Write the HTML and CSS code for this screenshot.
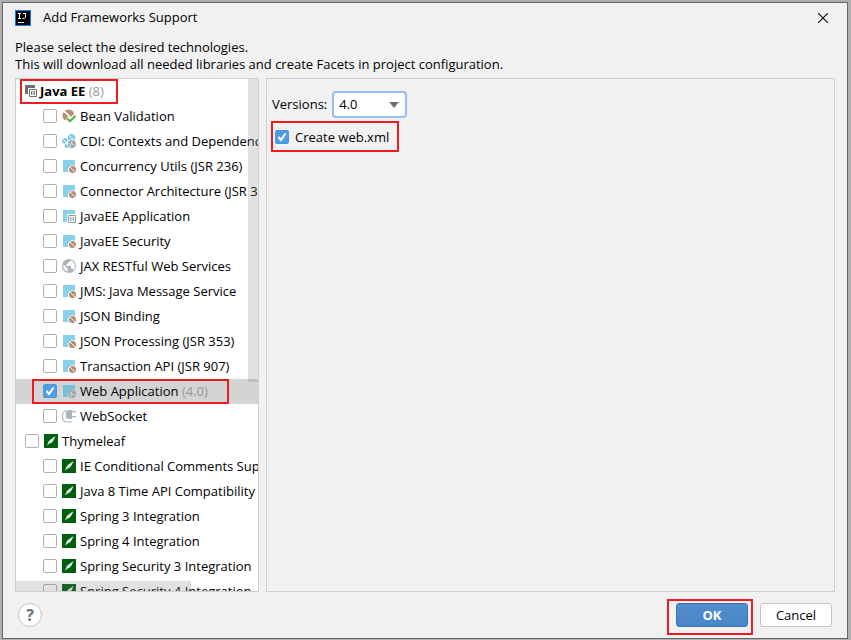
FILE: index.html
```html
<!DOCTYPE html>
<html lang="en">

<head>
    <meta charset="UTF-8">
    <title>Add Frameworks Support</title>
    <link rel="stylesheet" href="styles.css">
</head>

<body>
    <!-- icons used in the tree -->
    <svg class="sprite" aria-hidden="true">
        <symbol id="bean" viewBox="0 0 14 14">
            <circle cx="7" cy="7" r="6.5" fill="#b58f72"/>
            <path d="M1.500 2.500 C6 3 7 10 12.500 11.500" fill="none" stroke="#fff" stroke-width="1.800"/>
        </symbol>
        <symbol id="globe" viewBox="0 0 14 14">
            <circle cx="7" cy="7" r="7" fill="#a9b4bb"/>
            <path d="M1.300 5.500 L5.500 9 V12.500 C3 12 1 9.500 1.300 5.500 Z M8 1.300 V3 H6 V5 H4.500 V7 H9 V9.500 H10.500 L12 11 C13.600 8 13 3.500 9.500 1.800 Z" fill="#fff"/>
        </symbol>
        <symbol id="globe-small" viewBox="0 0 8 8">
            <circle cx="4" cy="4" r="3.900" fill="#98a4ac"/>
            <path d="M1 3.500 L3 5 V6.800 M4.500 1 L3 3 L5 4.500 L6.500 5.500" fill="none" stroke="#eee" stroke-width="0.900"/>
        </symbol>
        <symbol id="validation" viewBox="0 0 14 14">
            <use href="#bean" x="0" y="0" width="13" height="13"/>
            <path d="M4.500 9.500 L7.800 12.500 L14 6" fill="none" stroke="#fff" stroke-width="4.500"/>
            <path d="M5 9.500 L8 12.300 L13.500 6.800" fill="none" stroke="#59b03f" stroke-width="2"/>
        </symbol>
        <symbol id="cdi" viewBox="0 0 14 14">
            <circle cx="9.500" cy="3.700" r="3.700" fill="#7cc8e4"/>
            <path d="M6.500 1 L12.500 6.500" stroke="#fff"/>
            <circle cx="2.800" cy="6.800" r="2.800" fill="#7cc8e4"/>
            <path d="M1 5 L5 9" stroke="#fff"/>
            <circle cx="4.500" cy="12" r="2" fill="#7cc8e4"/>
            <circle cx="10" cy="10" r="4.800" fill="#fff"/>
            <use href="#globe-small" x="6" y="6" width="8" height="8"/>
        </symbol>
        <symbol id="module-bean" viewBox="0 0 14 14">
            <path d="M1 1 H13 V7 H9 L6.500 9 V13 H1 Z" fill="#87d1eb"/>
            <circle cx="10.500" cy="10.500" r="4.300" fill="#fff"/>
            <circle cx="10.500" cy="10.500" r="3.500" fill="#b58f72"/>
            <path d="M8 8 L13 13" stroke="#fff" stroke-width="0.900"/>
        </symbol>
        <symbol id="module-ee" viewBox="0 0 14 14">
            <path d="M1 1 H13 V5 H5 V13 H1 Z" fill="#87d1eb"/>
            <path d="M6.500 6.500 H13.500 V13.500 H6.500 Z" fill="#fff" stroke="#8f9ba3"/>
            <path d="M9.500 8.500 H8.500 V11.500 H9.500 M8.500 10 H9.500 M12 8.500 H11 V11.500 H12 M11 10 H12" fill="none" stroke="#8f9ba3"/>
        </symbol>
        <symbol id="module-web" viewBox="0 0 14 14">
            <path d="M1 1 H13 V5.500 H9 L5.500 8 V13 H1 Z" fill="#75bfd9"/>
            <use href="#globe-small" x="6" y="6" width="8" height="8"/>
        </symbol>
        <symbol id="plug" viewBox="0 0 14 14">
            <path d="M7 1 H10 V10 H7 C4.500 10 4 8.500 4 7.500 V3.500 C4 2.500 4.500 1 7 1 Z M10 2 H14 V3.300 H10 Z M10 7 H14 V8.300 H10 Z" fill="#a9b4bb"/>
            <path d="M4 1.500 C-1.500 4 -0.500 13 5 13 H10" fill="none" stroke="#a9b4bb" stroke-width="1.200"/>
        </symbol>
        <symbol id="leaf" viewBox="0 0 14 14">
            <path d="M0 0 H14 V14 H0 Z" fill="#005f0f"/>
            <path d="M11.500 2 C10 6 8.500 9 5.500 9.500 L3.300 11.300 L3 11 L4.200 9 C4.200 6.500 8 4.500 11.500 2 Z" fill="#e6efe7"/>
        </symbol>
        <symbol id="javaee" viewBox="0 0 14 14">
            <path d="M0 1 H10 V4 H3 V10 H0 Z" fill="#6e6e6e"/>
            <path d="M4.500 5.500 H11.500 V12.500 H4.500 Z" fill="#fff" stroke="#6e6e6e"/>
            <path d="M7.500 7.500 H6.500 V10.500 H7.500 M6.500 9 H7.500 M10 7.500 H9 V10.500 H10 M9 9 H10" fill="none" stroke="#6e6e6e"/>
        </symbol>
    </svg>

    <div class="dialog">
        <div class="title-bar">
            <svg class="logo" viewBox="0 0 16 16">
                <path d="M0 0 H16 V16 H0 Z" fill="#087cfa"/>
                <path d="M1 1 H15 V15 H1 Z" fill="#000"/>
                <path d="M3 3.500 H6 M4.500 3.500 V8.500 M3 8.500 H6 M8 3.500 H10.500 V7.500 L9.500 8.500 H7.500 M3 12.500 H9" fill="none" stroke="#fff"/>
            </svg>
            <h1>Add Frameworks Support</h1>
            <button type="button" class="close" aria-label="Close">
                <svg viewBox="0 0 10 10"><path d="M0 0 L10 10 M10 0 L0 10" stroke="#111" stroke-width="1.200"/></svg>
            </button>
        </div>

        <p class="info">Please select the desired technologies.<br>This will download all needed libraries and create Facets in project configuration.</p>

        <div class="content">
            <div class="tree">
                <ul>
                    <li class="row group marked mark-group"><svg class="icon"><use href="#javaee"/></svg><span><b>Java EE</b> <i>(8)</i></span></li>
                    <li class="row"><input type="checkbox" id="bean-validation"><label for="bean-validation"><svg class="icon"><use href="#validation"/></svg>Bean Validation</label></li>
                    <li class="row"><input type="checkbox" id="cdi-di"><label for="cdi-di"><svg class="icon"><use href="#cdi"/></svg>CDI: Contexts and Dependency</label></li>
                    <li class="row"><input type="checkbox" id="concurrency"><label for="concurrency"><svg class="icon"><use href="#module-bean"/></svg>Concurrency Utils (JSR 236)</label></li>
                    <li class="row"><input type="checkbox" id="connector"><label for="connector"><svg class="icon"><use href="#module-bean"/></svg>Connector Architecture (JSR 32</label></li>
                    <li class="row"><input type="checkbox" id="ee-app"><label for="ee-app"><svg class="icon"><use href="#module-ee"/></svg>JavaEE Application</label></li>
                    <li class="row"><input type="checkbox" id="ee-security"><label for="ee-security"><svg class="icon"><use href="#module-bean"/></svg>JavaEE Security</label></li>
                    <li class="row"><input type="checkbox" id="jax"><label for="jax"><svg class="icon"><use href="#globe"/></svg>JAX RESTful Web Services</label></li>
                    <li class="row"><input type="checkbox" id="jms"><label for="jms"><svg class="icon"><use href="#module-bean"/></svg>JMS: Java Message Service</label></li>
                    <li class="row"><input type="checkbox" id="json-b"><label for="json-b"><svg class="icon"><use href="#module-bean"/></svg>JSON Binding</label></li>
                    <li class="row"><input type="checkbox" id="json-p"><label for="json-p"><svg class="icon"><use href="#module-bean"/></svg>JSON Processing (JSR 353)</label></li>
                    <li class="row"><input type="checkbox" id="transaction"><label for="transaction"><svg class="icon"><use href="#module-bean"/></svg>Transaction API (JSR 907)</label></li>
                    <li class="row selected marked mark-row"><input type="checkbox" id="web-app" checked><label for="web-app"><svg class="icon"><use href="#module-web"/></svg><span>Web Application <i>(4.0)</i></span></label></li>
                    <li class="row"><input type="checkbox" id="websocket"><label for="websocket"><svg class="icon"><use href="#plug"/></svg>WebSocket</label></li>
                    <li class="row group"><input type="checkbox" id="thymeleaf"><label for="thymeleaf"><svg class="icon"><use href="#leaf"/></svg>Thymeleaf</label></li>
                    <li class="row"><input type="checkbox" id="ie-comments"><label for="ie-comments"><svg class="icon"><use href="#leaf"/></svg>IE Conditional Comments Supp</label></li>
                    <li class="row"><input type="checkbox" id="time-api"><label for="time-api"><svg class="icon"><use href="#leaf"/></svg>Java 8 Time API Compatibility</label></li>
                    <li class="row"><input type="checkbox" id="spring3"><label for="spring3"><svg class="icon"><use href="#leaf"/></svg>Spring 3 Integration</label></li>
                    <li class="row"><input type="checkbox" id="spring4"><label for="spring4"><svg class="icon"><use href="#leaf"/></svg>Spring 4 Integration</label></li>
                    <li class="row"><input type="checkbox" id="security3"><label for="security3"><svg class="icon"><use href="#leaf"/></svg>Spring Security 3 Integration</label></li>
                    <li class="row"><input type="checkbox" id="security4"><label for="security4"><svg class="icon"><use href="#leaf"/></svg>Spring Security 4 Integration</label></li>
                </ul>
                <div class="scroll-y"></div>
                <div class="scroll-x"></div>
            </div>

            <div class="settings">
                <div class="version">
                    <label for="versions">Versions:</label>
                    <div class="select-box">
                        <select id="versions">
                            <option>4.0</option>
                        </select>
                        <svg class="arrow" viewBox="0 0 8 5"><path d="M0 0 H8 L4 5 Z" fill="#6e6e6e"/></svg>
                    </div>
                </div>
                <div class="create marked mark-create">
                    <input type="checkbox" id="create-xml" checked>
                    <label for="create-xml">Create web.xml</label>
                </div>
            </div>
        </div>

        <div class="footer">
            <button type="button" class="help" aria-label="Help">?</button>
            <div class="marked mark-ok"><button type="submit" class="btn ok">OK</button></div>
            <button type="button" class="btn">Cancel</button>
        </div>
    </div>
</body>

</html>
```
FILE: styles.css
```css
* {
    box-sizing: border-box;
}

body {
    margin: 0;
    padding: 2px 3px 1px 2px;
    height: 100vh;
    background-color: #b0b0b0;
    font-family: "Open Sans", sans-serif;
    font-size: 13px;
    line-height: 17px;
    color: #000;
}

.sprite {
    display: none;
}

.dialog {
    height: 100%;
    display: flex;
    flex-direction: column;
    padding: 0 12px;
    background-color: #f1f1f1;
    border: 1px solid #666;
}

.title-bar {
    display: flex;
    align-items: center;
    height: 29px;
}

.title-bar h1 {
    margin: 0 auto 0 12px;
    font-size: 13px;
    font-weight: normal;
}

.logo {
    width: 16px;
    height: 16px;
}

.close {
    width: 24px;
    height: 20px;
    padding: 0;
    border: none;
    background: none;
    display: flex;
    align-items: center;
    justify-content: center;
}

.close svg {
    width: 10px;
    height: 10px;
}

.info {
    margin: 7px 0 5px;
}

.content {
    flex: 1;
    min-height: 0;
    display: flex;
    gap: 7px;
}

.tree {
    position: relative;
    flex: 0 0 30%;
    max-width: 244px;
    overflow: hidden;
    background-color: #fff;
    border: 1px solid #cfcfcf;
}

.tree ul {
    margin: 0;
    padding: 0;
    list-style: none;
}

.row {
    display: flex;
    align-items: center;
    gap: 5px;
    height: 25px;
    padding-left: 27px;
    white-space: nowrap;
}

.row.group {
    padding-left: 9px;
}

.row.mark-group {
    gap: 1px;
}

.row label {
    display: flex;
    align-items: center;
    gap: 4px;
}

.row.selected {
    background-color: #d4d4d4;
}

.row i {
    font-style: normal;
    color: #999;
}

.icon {
    width: 14px;
    height: 14px;
    margin-bottom: 1px;
    flex: none;
}

input[type="checkbox"] {
    appearance: none;
    flex: none;
    width: 14px;
    height: 14px;
    margin: 0 0 1px;
    border: 1px solid #b0b0b0;
    border-radius: 2px;
    background-color: #fff;
}

input[type="checkbox"]:checked {
    border-color: #4a96dd;
    background: #4f9ee3 url("data:image/svg+xml,%3Csvg xmlns='http://www.w3.org/2000/svg' viewBox='0 0 12 12'%3E%3Cpath d='M2.500 6 L5 9 L9.500 2.500' fill='none' stroke='white' stroke-width='2'/%3E%3C/svg%3E") center / 12px no-repeat;
}

.scroll-y {
    position: absolute;
    top: 0;
    right: 0;
    width: 10px;
    height: 303px;
    background-color: rgba(120, 120, 120, 0.22);
}

.scroll-x {
    position: absolute;
    left: 0;
    bottom: 0;
    width: 175px;
    height: 10px;
    background-color: rgba(120, 120, 120, 0.22);
}

.settings {
    flex: 1;
    padding: 12px 5px;
    border: 1px solid #cfcfcf;
}

.version {
    display: flex;
    align-items: center;
    gap: 5px;
}

.select-box {
    position: relative;
    width: 75px;
}

.select-box select {
    appearance: none;
    display: block;
    width: 100%;
    height: 27px;
    padding: 0 5px;
    border: 2px solid #94bfef;
    border-radius: 4px;
    background-color: #fff;
    font: inherit;
    color: #000;
    outline: none;
}

.arrow {
    position: absolute;
    top: 11px;
    right: 8px;
    width: 10px;
    height: 6px;
    pointer-events: none;
}

.create {
    display: flex;
    align-items: center;
    gap: 6px;
    margin-top: 11px;
    padding-left: 3px;
}

.footer {
    display: flex;
    align-items: center;
    gap: 12px;
    height: 46px;
    padding: 0 3px;
}

.help {
    width: 24px;
    height: 24px;
    margin-right: auto;
    padding: 0;
    border: 1px solid #c4c4c4;
    border-radius: 50%;
    background-color: #fff;
    font: bold 16px "Open Sans", sans-serif;
    line-height: 20px;
    color: #6e6e6e;
}

.btn {
    display: block;
    width: 72px;
    height: 24px;
    padding: 0;
    border: 1px solid #c4c4c4;
    border-radius: 3px;
    background-color: #fff;
    font: inherit;
}

.btn.ok {
    border-color: #3d75b1;
    background: linear-gradient(#528ccb, #4a86c7);
    color: #fff;
    font-weight: bold;
}

/* red highlight frames */
.marked {
    position: relative;
}

.marked::after {
    content: "";
    position: absolute;
    box-sizing: border-box;
    border: 2px solid #ed1c24;
    pointer-events: none;
}

.mark-group::after {
    inset: 0 auto 0 4px;
    width: 98px;
}

.mark-row::after {
    inset: 0 auto 0 16px;
    width: 197px;
}

.mark-create::after {
    inset: -8px auto -6px -1px;
    width: 128px;
}

.mark-ok::after {
    inset: -4px -5px -8px -9px;
}
```
